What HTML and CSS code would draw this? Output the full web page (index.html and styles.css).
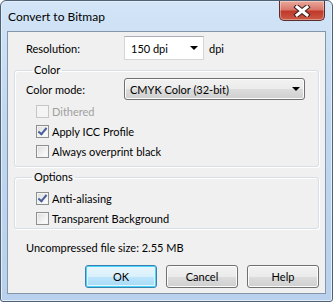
FILE: index.html
```html
<html>
<head>
    <title>Convert to Bitmap</title>
    <link rel="stylesheet" href="styles.css">
</head>
<body>
    <div class="window">
        <div class="titlebar">
            <span class="title">Convert to Bitmap</span>
            <button class="closeBtn" title="Close">
                <svg width="20" height="12" viewBox="0 0 20 12">
                    <path d="M5 2 L15 10 M15 2 L5 10" stroke="#3a2020" stroke-width="5" stroke-linecap="square" fill="none"/>
                    <path d="M5 2 L15 10 M15 2 L5 10" stroke="#ffffff" stroke-width="3" stroke-linecap="square" fill="none"/>
                </svg>
            </button>
        </div>

        <div class="client">
            <div class="resRow">
                <span class="rowLabel">Resolution:</span>
                <div class="combo">
                    <span>150 dpi</span>
                    <span class="arrow"></span>
                </div>
                <span class="unit">dpi</span>
            </div>

            <fieldset class="group groupColor">
                <legend>Color</legend>
                <div class="modeRow">
                    <span class="rowLabel">Color mode:</span>
                    <div class="dropdown">
                        <span>CMYK Color (32-bit)</span>
                        <span class="arrow"></span>
                    </div>
                </div>
                <label class="check disabled"><span class="box"></span>Dithered</label>
                <label class="check"><span class="box checked"></span>Apply ICC Profile</label>
                <label class="check"><span class="box"></span>Always overprint black</label>
            </fieldset>

            <fieldset class="group groupOptions">
                <legend>Options</legend>
                <label class="check"><span class="box checked"></span>Anti-aliasing</label>
                <label class="check"><span class="box"></span>Transparent Background</label>
            </fieldset>

            <p class="fileSize">Uncompressed file size: 2.55 MB</p>

            <div class="buttons">
                <button class="dlgButton default">OK</button>
                <button class="dlgButton">Cancel</button>
                <button class="dlgButton">Help</button>
            </div>
        </div>
    </div>
</body>
</html>
```

FILE: styles.css
```css
body {
    margin: 0px;
    background-color: #ffffff;
    font-family: Lato, "Liberation Sans", sans-serif;
    font-size: 11px;
    color: #000000;
}

.window {
    width: 333px;
    height: 302px;
    box-sizing: border-box;
    border: 1px solid #4f6175;
    border-radius: 6px 6px 3px 3px;
    background: linear-gradient(#d3e5f7, #c0d7f0 40%, #b9d1ec);
    box-shadow: inset 0 0 0 1px #e4eefa;
    padding: 0px 6px 7px 6px;
    display: flex;
    flex-direction: column;
}

/*  === Title bar    === */

.titlebar {
    height: 30px;
    display: flex;
    justify-content: space-between;
    align-items: flex-start;
}

.title {
    margin-left: 1px;
    margin-top: 8px;
    font-size: 12px;
    line-height: 16px;
}

.closeBtn {
    width: 46px;
    height: 20px;
    margin-right: 1px;
    padding: 0px;
    border: 1px solid #5b2e2e;
    border-top: none;
    border-radius: 0px 0px 5px 5px;
    background: linear-gradient(#e9a99b, #d9786a 45%, #c0392a 55%, #cc5a48);
    box-shadow: inset 0 0 0 1px rgba(255, 255, 255, 0.35);
    display: flex;
    align-items: center;
    justify-content: center;
}

/*  === Client area    === */

.client {
    height: 263px;
    box-sizing: border-box;
    border: 1px solid #8396ab;
    background-color: #f0f0f0;
    display: flex;
    flex-direction: column;
}

.rowLabel {
    width: 98px;
}

.resRow {
    display: flex;
    align-items: center;
    margin-top: 4px;
    padding-left: 18px;
    height: 24px;
}

.combo {
    width: 80px;
    height: 24px;
    box-sizing: border-box;
    border: 1px solid #d6d6d6;
    border-top-color: #abadb3;
    background-color: #ffffff;
    display: flex;
    align-items: center;
    justify-content: space-between;
    padding: 0px 5px 0px 6px;
}

.arrow {
    width: 0px;
    height: 0px;
    border-left: 4px solid transparent;
    border-right: 4px solid transparent;
    border-top: 4px solid #000000;
}

.unit {
    margin-left: 5px;
}

/*  === Group boxes    === */

.group {
    margin: 3px 6px 0px 6px;
    border: 1px solid #d5dfe5;
    border-radius: 3px;
    box-shadow: inset 1px 1px 0 #ffffff, 1px 1px 0 #ffffff;
    min-width: 0px;
}

.group legend {
    padding: 0px 2px;
    margin-left: 6px;
    line-height: 14px;
}

.groupColor {
    padding: 1px 0px 5px 11px;
}

.groupOptions {
    padding: 4px 0px 0px 11px;
}

.modeRow {
    display: flex;
    align-items: center;
    height: 22px;
    margin-bottom: 1px;
}

.dropdown {
    width: 181px;
    height: 22px;
    box-sizing: border-box;
    border: 1px solid #707070;
    border-radius: 3px;
    background: linear-gradient(#f2f2f2, #ebebeb 50%, #dddddd 50%, #cfcfcf);
    box-shadow: inset 0 0 0 1px #fcfcfc;
    display: flex;
    align-items: center;
    justify-content: space-between;
    padding: 0px 4px 0px 5px;
}

.check {
    display: flex;
    align-items: center;
    height: 20px;
    margin-left: 10px;
}

.box {
    width: 13px;
    height: 13px;
    box-sizing: border-box;
    border: 1px solid #8e8f8f;
    background: linear-gradient(135deg, #dcdcdc, #f6f6f6 70%, #ffffff);
    box-shadow: inset 0 0 0 1px #f4f4f4;
    margin-right: 3px;
    position: relative;
}

.box.checked::after {
    content: "";
    position: absolute;
    left: 3px;
    top: 0px;
    width: 3px;
    height: 7px;
    border-right: 2px solid #4a5f97;
    border-bottom: 2px solid #4a5f97;
    transform: rotate(40deg);
}

.check.disabled {
    color: #a0a0a0;
}

.check.disabled .box {
    border-color: #c6c6c6;
    background: #f4f4f4;
    box-shadow: none;
}

.fileSize {
    margin: 12px 0px 0px 18px;
    line-height: 14px;
}

/*  === Buttons    === */

.buttons {
    display: flex;
    justify-content: flex-end;
    gap: 9px;
    margin-top: 10px;
    padding-right: 6px;
}

.dlgButton {
    width: 72px;
    height: 23px;
    padding: 0px;
    border: 1px solid #707070;
    border-radius: 3px;
    background: linear-gradient(#f2f2f2, #ebebeb 50%, #dddddd 50%, #cfcfcf);
    box-shadow: inset 0 0 0 1px #fcfcfc;
    font-family: Lato, "Liberation Sans", sans-serif;
    font-size: 11px;
    color: #000000;
}

.dlgButton.default {
    border-color: #3c7fb1;
    box-shadow: inset 0 0 0 1px #48d5f9, inset 0 0 0 2px #e5f6fd;
    background: linear-gradient(#eaf6fd, #d9f0fc 50%, #bee6fd 50%, #a7d9f5);
}
```
